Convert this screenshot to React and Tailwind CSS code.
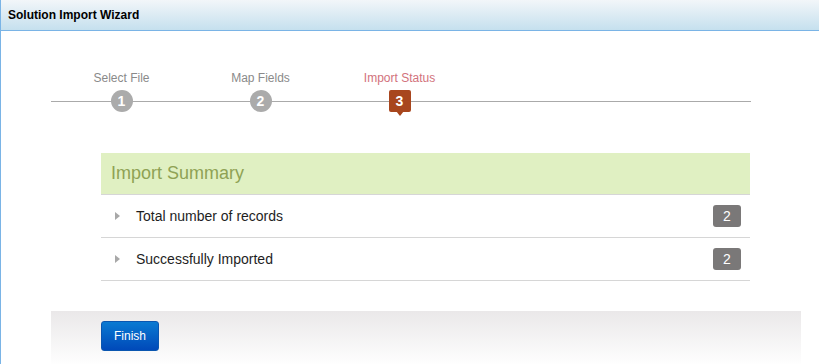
import React from "react";

const font = { fontFamily: '"Liberation Sans", Arial, sans-serif' };

function Step({ n, label, active }) {
  return (
    <div className="flex w-[139px] flex-col items-center">
      <div className={`h-[14px] text-[12px] leading-[14px] ${active ? "text-[#d2727c]" : "text-[#8a8a8a]"}`}>{label}</div>
      <div className="mt-[5px]">
        {active ? (
          <div className="relative flex h-[22px] w-[22px] items-center justify-center rounded-[2px] bg-[#a8461e] text-[14px] font-bold text-white">
            {n}
            <div className="absolute left-1/2 top-[21px] h-0 w-0 -translate-x-1/2 border-x-[4px] border-t-[5px] border-x-transparent border-t-[#a8461e]" />
          </div>
        ) : (
          <div className="flex h-[22px] w-[22px] items-center justify-center rounded-full bg-[#ababab] text-[14px] font-bold text-white">
            {n}
          </div>
        )}
      </div>
    </div>
  );
}

function Row({ label, count }) {
  return (
    <div className="flex h-[43px] items-center border-b border-[#d6d6d6] pl-[14px] pr-[9px]">
      <div className="h-0 w-0 border-y-[4px] border-l-[5px] border-y-transparent border-l-[#a8a8a8]" />
      <div className="ml-[16px] flex-1 text-[14px] text-[#1e1e1e]">{label}</div>
      <div className="flex h-[22px] w-[28px] items-center justify-center rounded-[3px] bg-[#7a7878] text-[14px] text-white">
        {count}
      </div>
    </div>
  );
}

export default function App() {
  return (
    <div style={font} className="h-[364px] w-[819px] overflow-hidden border-l border-[#7ab4e6] bg-white">
      <div className="flex h-[31px] items-center border-b border-[#7ab4e6] bg-[linear-gradient(#f2f6f9,#c5e0ee)] pl-[7px] text-[12px] font-bold text-black">
        Solution Import Wizard
      </div>
      <div className="pl-[50px]">
        <div className="relative mt-[40px] w-[700px]">
          <div className="absolute left-0 right-0 top-[30px] h-px bg-[#aaaaaa]" />
          <div className="relative flex pl-[1px]">
            <Step n="1" label="Select File" />
            <Step n="2" label="Map Fields" />
            <Step n="3" label="Import Status" active />
          </div>
        </div>
        <div className="ml-[50px] mt-[41px] w-[649px]">
          <div className="flex h-[42px] items-center border-b border-[#d6d6d6] bg-[#e0f0c2] pl-[10px] text-[18px] text-[#8fa254]">
            Import Summary
          </div>
          <Row label="Total number of records" count="2" />
          <Row label="Successfully Imported" count="2" />
        </div>
        <div className="mt-[30px] h-[53px] w-[750px] bg-[linear-gradient(#eae8e9,#fefefe)] pl-[50px] pt-[10px]">
          <button className="flex h-[30px] w-[58px] items-center justify-center rounded-[3px] border border-[#0a56b0] bg-[linear-gradient(#0a7ad2,#0049b9)] text-[12px] text-white">
            Finish
          </button>
        </div>
      </div>
    </div>
  );
}
